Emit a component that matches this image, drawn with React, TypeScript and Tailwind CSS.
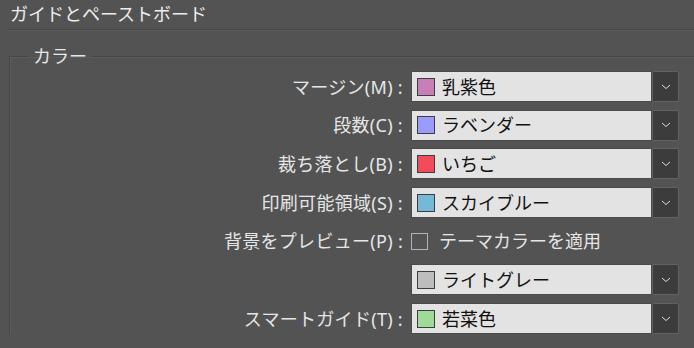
const font = { fontFamily: '"Noto Sans", "Noto Sans CJK JP", sans-serif' };

type Row = { label: string; color?: string; value?: string; checkbox?: string };

const rows: Row[] = [
  { label: "マージン(M) :", color: "#c87fb9", value: "乳紫色" },
  { label: "段数(C) :", color: "#9a9cfb", value: "ラベンダー" },
  { label: "裁ち落とし(B) :", color: "#f24c5c", value: "いちご" },
  { label: "印刷可能領域(S) :", color: "#75b9d8", value: "スカイブルー" },
  { label: "背景をプレビュー(P) :", checkbox: "テーマカラーを適用" },
  { label: "", color: "#bdbdbd", value: "ライトグレー" },
  { label: "スマートガイド(T) :", color: "#9edb98", value: "若菜色" },
];

function Chevron() {
  return (
    <svg width="10" height="6" viewBox="0 0 10 6" fill="none">
      <path d="M1 1l4 3.5L9 1" stroke="#dcdcdc" strokeWidth="1" />
    </svg>
  );
}

function Dropdown({ color, value }: { color: string; value: string }) {
  return (
    <div className="flex h-[31px] w-[268px]">
      <div className="flex flex-1 items-center bg-[#e3e3e3] pl-[5px] border border-[#4a4a4a]">
        <span
          className="h-[18px] w-[18px] border border-[#3e3e3e]"
          style={{ backgroundColor: color }}
        />
        <span className="ml-[7px] text-[18px] leading-none text-[#111]">{value}</span>
      </div>
      <div className="flex w-[27px] items-center justify-center rounded-[2px] border border-[#626262] bg-[#3c3c3c]">
        <Chevron />
      </div>
    </div>
  );
}

export default function App() {
  return (
    <div className="h-[348px] w-[694px] overflow-hidden bg-[#535353] text-[#e6e6e6]" style={font}>
      <div className="h-[29px] pl-[10px] pt-[1px] text-[18px] leading-[26px] text-[#ececec]">
        ガイドとペーストボード
      </div>
      <div className="ml-[8px] border-b border-[#474747]" />
      <div className="ml-[8px] border-b border-[#5b5b5b]" />

      <fieldset className="ml-[9px] mt-[15px] border-l border-t border-[#464646] p-0 shadow-[inset_1px_1px_0_#5c5c5c]">
        <legend className="ml-[18px] px-[5px] text-[18px] leading-[20px]">カラー</legend>
        <div className="mt-[5px] flex flex-col gap-[7.7px]">
          {rows.map((r, i) => (
            <div key={i} className="flex h-[31px] items-center">
              <div className="w-[393px] text-right text-[18px] leading-none tracking-[0.3px]">
                {r.label}
              </div>
              <div className="ml-[8px]">
                {r.checkbox ? (
                  <div className="flex items-center">
                    <span className="h-[17px] w-[17px] border border-[#b4b4b4]" />
                    <span className="ml-[11px] text-[18px] leading-none">{r.checkbox}</span>
                  </div>
                ) : (
                  <Dropdown color={r.color!} value={r.value!} />
                )}
              </div>
            </div>
          ))}
        </div>
      </fieldset>
    </div>
  );
}
